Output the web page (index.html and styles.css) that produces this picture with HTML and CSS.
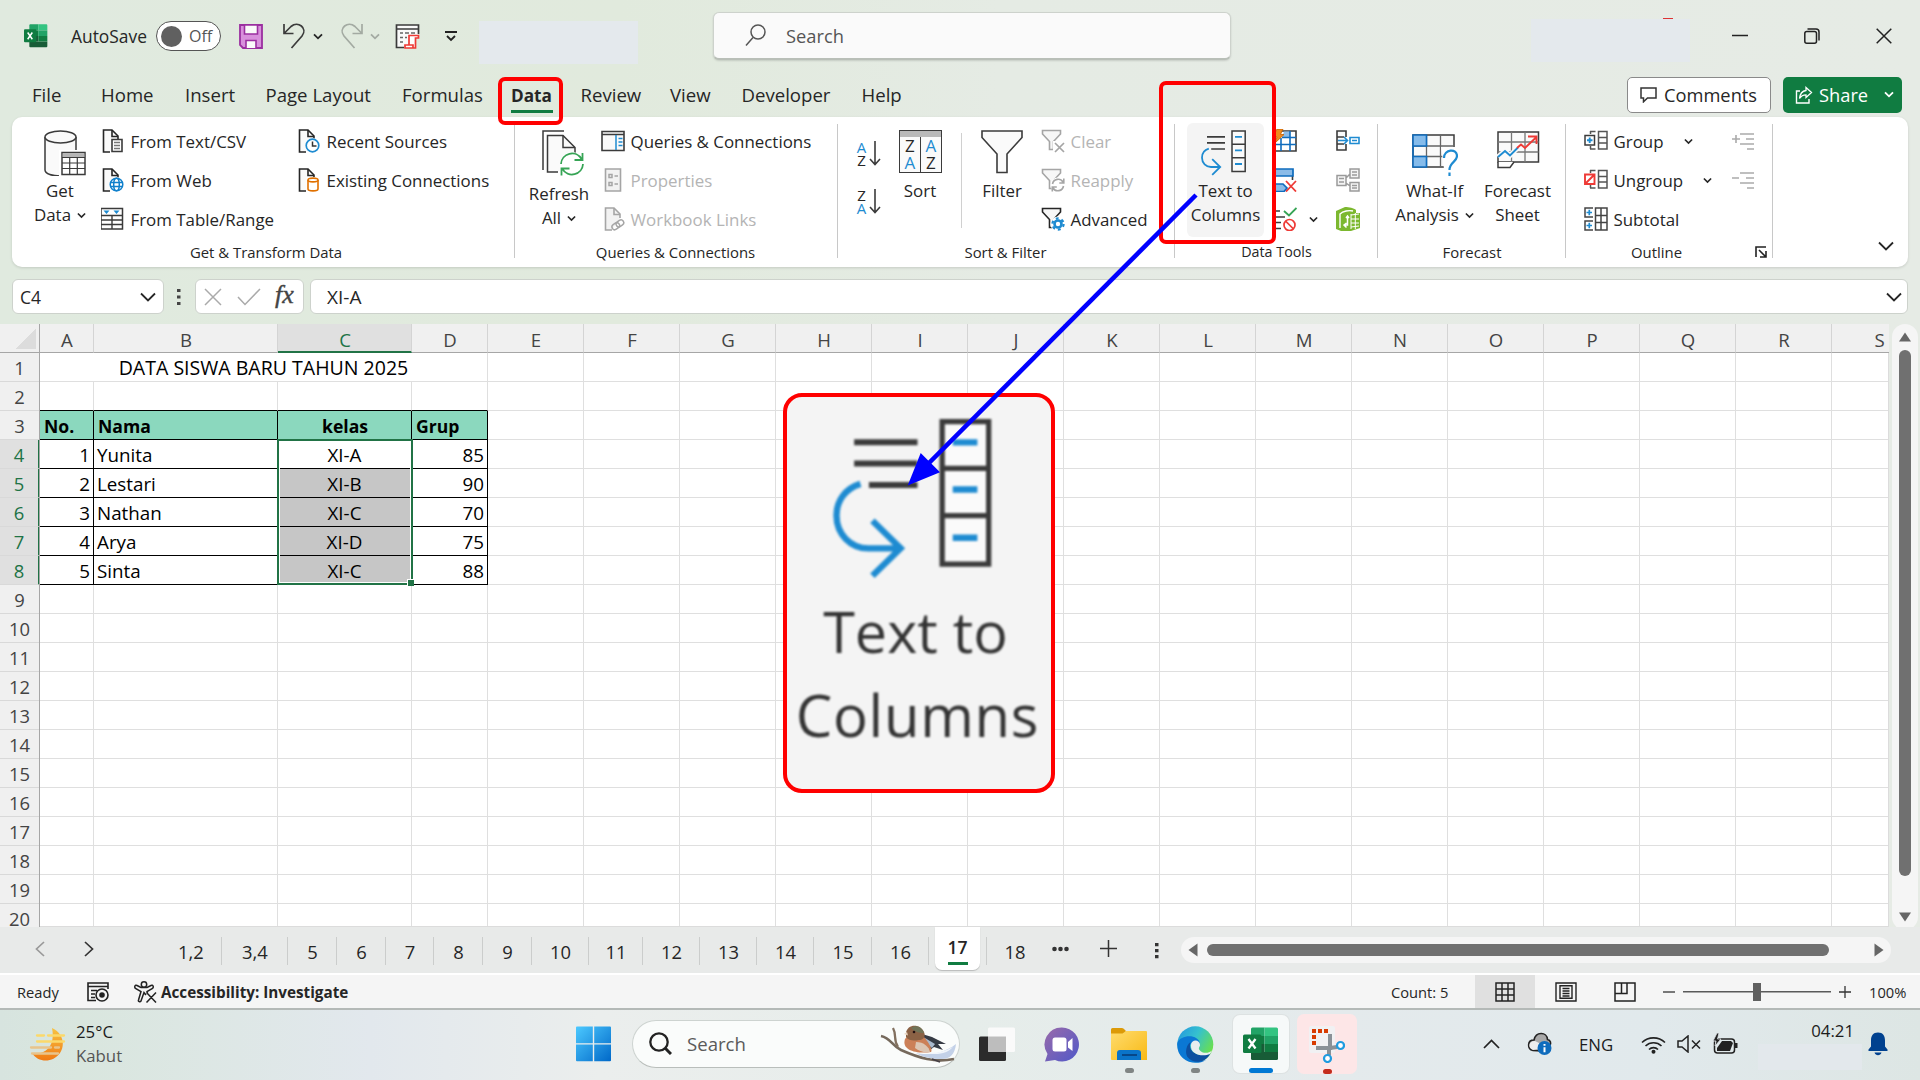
FILE: index.html
```html
<!DOCTYPE html>
<html lang="en">
<head>
<meta charset="utf-8">
<title>Excel</title>
<link rel="stylesheet" href="styles.css">
</head>
<body>
<svg class="defs" width="0" height="0">
  <symbol id="chev" viewBox="0 0 10 7"><path d="M1 1.3l4 4 4-4" fill="none" stroke="currentColor" stroke-width="1.8"/></symbol>
  <symbol id="chev-lg" viewBox="0 0 16 10"><path d="M1 1.5l7 7 7-7" fill="none" stroke="currentColor" stroke-width="1.8"/></symbol>
  <symbol id="page" viewBox="0 0 24 24"><path d="M9 23H2.500V1H11l6 6v3" fill="#fafafa" stroke="currentColor" stroke-width="1.6"/><path d="M11 1v6.500h6" fill="none" stroke="currentColor" stroke-width="1.600"/></symbol>
  <symbol id="ttc" viewBox="0 0 46 46">
    <path d="M6 6.900h18M6 12.900h18M10.200 19h13.800" stroke="#3b3b3b" stroke-width="1.700"/>
    <path d="M31 1h13.200v40.500H31zM31 14.300h13.200M31 27.700h13.200" fill="#fafafa" stroke="#3b3b3b" stroke-width="1.500"/>
    <path d="M34 6.900h7M34 20.300h7M34 34h7" stroke="#1e8bd1" stroke-width="1.800"/>
    <path d="M7.800 18.700C3.500 20 1 23.500 1 27.700 1 33 5 37 10 37h9M11.200 29.200l8 7.800-8 7.800" fill="none" stroke="#1e8bd1" stroke-width="1.800"/>
  </symbol>
  <symbol id="excel" viewBox="0 0 36 34">
    <path d="M8 2a1.500 1.500 0 0 1 1.500-1.500H21.500V9H8z" fill="#21a366"/><path d="M21.500.5h12A1.500 1.500 0 0 1 35 2v7H21.500z" fill="#33c481"/>
    <path d="M8 9h13.500v8H8z" fill="#107c41"/><path d="M21.500 9H35v8H21.500z" fill="#21a366"/>
    <path d="M8 17h13.500v8H8z" fill="#185c37"/><path d="M21.500 17H35v8H21.500z" fill="#107c41"/>
    <path d="M8 25h27v6.500a1.500 1.500 0 0 1-1.500 1.500h-24A1.500 1.500 0 0 1 8 31.500z" fill="#185c37"/>
    <rect y="7.500" width="18.500" height="18.500" rx="1.500" fill="#107c41"/>
    <path d="M5.500 12l7 9.500M12.500 12l-7 9.500" stroke="#fff" stroke-width="2.300"/>
  </symbol>
  <symbol id="funnel" viewBox="0 0 24 24"><path d="M1.500 1.500h18v3.500l-7 7.500v8h-4v-8l-7-7.500z" fill="#f7f7f7" stroke="currentColor" stroke-width="1.600"/></symbol>
</svg>

<div class="window">
  <header class="titlebar">
    <svg class="i-logo" width="24" height="24" viewBox="0 0 36 34" preserveAspectRatio="none"><use href="#excel"/></svg>
    <span class="autosave">AutoSave</span>
    <span class="toggle"><i></i>Off</span>
    <svg width="24" height="25" viewBox="0 0 24 25"><path d="M1 1h22v23H4l-3-3z" fill="#d890dc" stroke="#9b2fa0" stroke-width="1.800"/><path d="M5.500 1h13v9h-13zM7 24v-7.500h10V24" fill="#fafafa" stroke="#9b2fa0" stroke-width="1.600"/></svg>
    <svg width="24" height="26" viewBox="0 0 24 26"><path d="M2 1v9.500h9.500M2 10.500l7-7C16-2.500 26 5 20 13L9.500 25" fill="none" stroke="#3b3b3b" stroke-width="1.700"/></svg>
    <svg width="10" height="7"><use href="#chev"/></svg>
    <svg class="dim" width="24" height="26" viewBox="0 0 24 26"><path d="M22 1v9.500h-9.500M22 10.500l-7-7C8-2.500-2 5 4 13l10.500 12" fill="none" stroke="currentColor" stroke-width="1.700"/></svg>
    <svg class="dim" width="10" height="7"><use href="#chev"/></svg>
    <svg width="25" height="25" viewBox="0 0 25 25"><path d="M9 23.500H1.500V1h22v9M1.500 5h22" fill="#fafafa" stroke="#3b3b3b" stroke-width="1.700"/><path d="M5 9h3M10 9h4M16 9h4M5 13.500h3M10 13.500h2M5 18h3" stroke="#666" stroke-width="1.500"/><path d="M14 21V11.500h9.500V14h-3v10H10v-3h8v3" fill="#fff" stroke="#ee3a36" stroke-width="1.700"/></svg>
    <svg width="12" height="11" viewBox="0 0 12 11"><path d="M0 1h12" stroke="#222" stroke-width="2"/><path d="M2 5l4 4 4-4" fill="none" stroke="#222" stroke-width="1.800"/></svg>
    <span class="blank"></span>
    <div class="searchbox"><svg width="21" height="23" viewBox="0 0 21 23"><circle cx="13" cy="8" r="7" fill="none" stroke="#555" stroke-width="1.500"/><path d="M8 13.500L1 21.500" stroke="#555" stroke-width="1.500"/></svg>Search</div>
    <span class="blank account"><i class="badge"></i></span>
    <svg width="16" height="16" viewBox="0 0 16 16"><path d="M0 7.500h16" stroke="#222" stroke-width="1.500"/></svg>
    <svg width="16" height="16" viewBox="0 0 16 16"><rect x=".8" y="3.500" width="11.700" height="11.700" rx="2" fill="none" stroke="#222" stroke-width="1.500"/><path d="M3.500 1h8.500a3 3 0 0 1 3 3v8.500" fill="none" stroke="#222" stroke-width="1.500"/></svg>
    <svg width="16" height="16" viewBox="0 0 16 16"><path d="M.7.7l14.600 14.600M15.300.7L.7 15.300" stroke="#222" stroke-width="1.500"/></svg>
  </header>

  <nav class="tabs">
    <span>File</span><span>Home</span><span>Insert</span><span>Page Layout</span><span>Formulas</span><span class="on">Data</span><span>Review</span><span>View</span><span>Developer</span><span>Help</span>
    <button class="comments"><svg width="17" height="16" viewBox="0 0 17 16"><path d="M1 1h15v10H7.500L3.500 14.800V11H1z" fill="none" stroke="#333" stroke-width="1.500"/></svg>Comments</button>
    <button class="share"><svg width="18" height="18" viewBox="0 0 18 18"><path d="M5 5H1.500v12H14v-4" fill="none" stroke="#fff" stroke-width="1.400"/><path d="M11 1.500l5.500 5L11 11.500V8.800C8 8.800 6 10 4.500 12.500 5 8 7.500 5 11 4.500z" fill="none" stroke="#fff" stroke-width="1.300"/></svg>Share<svg class="sc" width="10" height="7"><use href="#chev"/></svg></button>
  </nav>

  <section class="ribbon">
    <div class="group g-get">
      <div class="gbody">
        <div class="big">
          <svg width="42" height="46" viewBox="0 0 42 46"><path d="M1 7v33c0 8 31 8 31 0V7" fill="#fafafa" stroke="#3b3b3b" stroke-width="1.500"/><ellipse cx="16.500" cy="7" rx="15.500" ry="6" fill="#fafafa" stroke="#3b3b3b" stroke-width="1.500"/><path d="M15 20h27v26H15z" fill="#fff"/><path d="M18 22.500h23v22H18z" fill="#fff" stroke="#3b3b3b" stroke-width="1.500"/><path d="M18.700 23.200h21.600v3.800H18.700z" fill="#b5b5b5"/><path d="M18 27.500h23M18 33h23M18 38.500h23M25.700 27.500v17M33.300 27.500v17" stroke="#3b3b3b" stroke-width="1.200"/></svg>
          <span>Get</span><span>Data <svg width="9" height="7"><use href="#chev"/></svg></span>
        </div>
        <div class="list">
          <div><svg width="24" height="24"><use href="#page"/><path d="M11 10.500h10v12H11z" fill="#fff" stroke="#3b3b3b" stroke-width="1.600"/><path d="M13 13.500h6M13 16.500h6M13 19.500h6" stroke="#777" stroke-width="1.300"/></svg>From Text/CSV</div>
          <div><svg width="24" height="24"><use href="#page"/><circle cx="15.500" cy="16.500" r="7.500" fill="#fff"/><g fill="none" stroke="#1080cc" stroke-width="1.500"><circle cx="15.500" cy="16.500" r="6.300"/><ellipse cx="15.500" cy="16.500" rx="2.800" ry="6.300"/><path d="M9.500 14.500h12M9.500 18.500h12"/></g></svg>From Web</div>
          <div><svg width="24" height="24" viewBox="0 0 24 24"><path d="M0 1.500h21.500V22H0z" fill="#fff" stroke="#3b3b3b" stroke-width="1.500"/><path d="M0 8.500h22M0 13h22M0 17.500h22M11 8.500V22" stroke="#3b3b3b" stroke-width="1.400"/><path d="M2.500 3.500h6l-3 3.500zM12.500 3.500h6l-3 3.500z" fill="#1e8bd1"/></svg>From Table/Range</div>
        </div>
        <div class="list c2">
          <div><svg width="24" height="24"><use href="#page"/><circle cx="15.500" cy="16.500" r="7.500" fill="#fff"/><path d="M15.500 12.500v4.500h4" fill="none" stroke="#333" stroke-width="1.500"/><circle cx="15.500" cy="16.500" r="6.300" fill="none" stroke="#1e8bd1" stroke-width="1.700"/></svg>Recent Sources</div>
          <div><svg width="24" height="24"><use href="#page"/><path d="M9.500 9h13v15h-13z" fill="#fff"/><path d="M11 12v9c0 2.500 10 2.500 10 0v-9" fill="#fff" stroke="#e07000" stroke-width="1.600"/><ellipse cx="16" cy="12" rx="5" ry="1.900" fill="#fff" stroke="#e07000" stroke-width="1.600"/></svg>Existing Connections</div>
        </div>
      </div>
      <div class="glabel">Get &amp; Transform Data</div>
    </div>

    <div class="group g-query">
      <div class="gbody">
        <div class="big low">
          <svg width="42" height="46" viewBox="0 0 42 46"><path d="M1 40V1h21" fill="none" stroke="#3b3b3b" stroke-width="1.500"/><path d="M16 42H5.500V5.500H21l12 12V24" fill="#fafafa" stroke="#3b3b3b" stroke-width="1.500"/><path d="M21 5.500v12h12" fill="none" stroke="#3b3b3b" stroke-width="1.500"/><circle cx="30" cy="34" r="12" fill="#fff"/><path d="M19 34a11 11 0 0 1 20.500-5M40.500 23v7h-8M41 34a11 11 0 0 1-20.500 5M19.500 45.500v-7h8" fill="none" stroke="#36a455" stroke-width="1.800"/></svg>
          <span>Refresh</span><span>All <svg width="9" height="7"><use href="#chev"/></svg></span>
        </div>
        <div class="list">
          <div><svg width="24" height="24" viewBox="0 0 24 24"><path d="M1 2.500h22v19H1z" fill="#fafafa" stroke="#3b3b3b" stroke-width="1.600"/><path d="M1 5.500h22" stroke="#3b3b3b" stroke-width="1.500"/><path d="M15 6v15" stroke="#1e8bd1" stroke-width="1.500"/><path d="M17.500 9.500h4M17.500 13h4M17.500 16.500h4" stroke="#1e8bd1" stroke-width="1.700"/></svg>Queries &amp; Connections</div>
          <div class="off"><svg width="24" height="24" viewBox="0 0 24 24"><path d="M4.500 1h15v22h-15z" fill="#f2f2f2" stroke="#a5a5a5" stroke-width="1.600"/><path d="M8 6.500h3v3H8zM8 14.500h3v3H8zM13.500 8h3.500M13.500 16h3.500" fill="none" stroke="#a5a5a5" stroke-width="1.500"/></svg>Properties</div>
          <div class="off"><svg class="sh" width="24" height="24" viewBox="-2 0 24 24"><path d="M9 23H2.500V1H11l6 6v4" fill="#f2f2f2" stroke="#a5a5a5" stroke-width="1.600"/><path d="M11 1v6.500h6" fill="none" stroke="#a5a5a5" stroke-width="1.600"/><g fill="none" stroke="#a5a5a5" stroke-width="1.500" transform="rotate(-35 15 18)"><rect x="8.500" y="15" width="8" height="5.500" rx="2.700"/><rect x="13.500" y="15" width="8" height="5.500" rx="2.700"/></g></svg>Workbook Links</div>
        </div>
      </div>
      <div class="glabel">Queries &amp; Connections</div>
    </div>

    <div class="group g-sort">
      <div class="gbody">
        <div class="azcol">
          <div class="az"><span><b>A</b><i>Z</i></span><svg width="12" height="25" viewBox="0 0 12 25"><path d="M6 0v23M1 18l5 5.500 5-5.500" fill="none" stroke="#3b3b3b" stroke-width="1.600"/></svg></div>
          <div class="az"><span><i>Z</i><b>A</b></span><svg width="12" height="25" viewBox="0 0 12 25"><path d="M6 0v23M1 18l5 5.500 5-5.500" fill="none" stroke="#3b3b3b" stroke-width="1.600"/></svg></div>
        </div>
        <div class="big">
          <div class="sorticon"><span><i>Z</i><b>A</b></span><span><b>A</b><i>Z</i></span></div>
          <span>Sort</span>
        </div>
        <div class="vsep"></div>
        <div class="big">
          <svg width="42" height="46" viewBox="0 0 42 46"><path d="M1 1h40v6.500L26 24v18.500H16V24L1 7.500z" fill="#fafafa" stroke="#3b3b3b" stroke-width="1.600"/></svg>
          <span>Filter</span>
        </div>
        <div class="list">
          <div class="off"><svg width="24" height="24"><use href="#funnel"/><path d="M12 12h12v12H12z" fill="#fff"/><path d="M14 14l9 9M23 14l-9 9" stroke="#a5a5a5" stroke-width="1.700"/></svg>Clear</div>
          <div class="off"><svg width="24" height="24"><use href="#funnel"/><circle cx="17" cy="17" r="7.500" fill="#fff"/><path d="M11.500 16a5.700 5.700 0 0 1 10.500-2M22.800 10.500V15h-4.500M22.500 18a5.700 5.700 0 0 1-10.500 2M11.300 23.500V19h4.500" fill="none" stroke="#a5a5a5" stroke-width="1.600"/></svg>Reapply</div>
          <div><svg width="24" height="24"><use href="#funnel"/><circle cx="17" cy="17" r="7.500" fill="#fff"/><circle cx="17" cy="17" r="3.500" fill="#fff" stroke="#1e8bd1" stroke-width="2.600"/><circle cx="17" cy="17" r="5.600" fill="none" stroke="#1e8bd1" stroke-width="2.200" stroke-dasharray="2.900 2.960"/></svg>Advanced</div>
        </div>
      </div>
      <div class="glabel">Sort &amp; Filter</div>
    </div>

    <div class="group g-tools">
      <div class="gbody">
        <div class="big hot"><svg width="46" height="46"><use href="#ttc"/></svg><span>Text to</span><span>Columns</span></div>
        <div class="list icons">
          <div><svg width="24" height="24" viewBox="0 0 24 24"><path d="M6 2h17v20H2v-7" fill="#fff" stroke="#3b3b3b" stroke-width="1.600"/><path d="M11 2.500h6v6h-8z" fill="#8bbce8"/><path d="M9 8.500h14M2 15.500h21M17 2v20M8 9v13" stroke="#0f6cbd" stroke-width="1.600" fill="none"/><path d="M4 0h6L7.500 5.500h3.500L2 14l2-6H0z" fill="#f08a1d" stroke="#c25e00" stroke-width=".8"/></svg></div>
          <div><svg width="24" height="24" viewBox="0 0 24 24"><path d="M2 8v8M19.500 8v4" stroke="#3b3b3b" stroke-width="1.600"/><path d="M1 1h19v7H1zM1 16h9l4 4-3 3.500H1z" fill="#8bbce8" stroke="#0f6cbd" stroke-width="1.700"/><path d="M13 13l10 10.500M23 13L13 23.500" stroke="#ee3a36" stroke-width="1.800"/></svg></div>
          <div><svg width="24" height="24" viewBox="0 0 24 24"><path d="M0 4h7M0 10h12M0 15.500h8M0 21.500h8" stroke="#3b3b3b" stroke-width="1.700"/><path d="M11 4l5 4.500L23.500 1" fill="none" stroke="#36a455" stroke-width="1.800"/><circle cx="16.500" cy="18" r="5.500" fill="#fff" stroke="#ee3a36" stroke-width="1.700"/><path d="M12.500 14l8 8" stroke="#ee3a36" stroke-width="1.700"/></svg><svg class="lc" width="9" height="7"><use href="#chev"/></svg></div>
        </div>
        <div class="list icons">
          <div><svg width="24" height="24" viewBox="0 0 24 24"><path d="M10 8V2H1v19h9v-6M1 8h7M1 15h7" fill="#fafafa" stroke="#3b3b3b" stroke-width="1.600"/><path d="M2 11.500h9M8 8l3.500 3.500L8 15M14 8.500h9v6h-9zM16 11.500h5" fill="none" stroke="#1e8bd1" stroke-width="1.600"/></svg></div>
          <div><svg width="24" height="24" viewBox="0 0 24 24"><path d="M1 7.500h9v10H1zM14 1h9v9h-9zM14 14.500h9V23h-9zM10 10l4-4M10 15l4 3M3 10.500h5M3 14h5M16 4h5M16 7h5M16 17.500h5M16 20h5" fill="#f4f4f4" stroke="#9a9a9a" stroke-width="1.500"/></svg></div>
          <div><svg width="24" height="24" viewBox="0 0 24 24"><path d="M0 4L9 0c4 0 9 1 11 3v3h4v15l-9 3H5L0 22z" fill="#7cb82f"/><path d="M4 21V7c3-3 9-4 13-3" fill="none" stroke="#fff" stroke-width="1.400"/><path d="M15 8l8-1M15 12h8M15 16h8M15 20l8-1M15 7v15M19.300 6v16" stroke="#fff" stroke-width="1"/><path d="M11.500 9v9H8.500M10.500 16l-2.500 2 2.500 2.500M10 11l1.500-2L13 11" fill="none" stroke="#fff" stroke-width="1.500"/></svg></div>
        </div>
      </div>
      <div class="glabel tools">Data Tools</div>
    </div>

    <div class="group g-fore">
      <div class="gbody">
        <div class="big">
          <svg width="46" height="46" viewBox="0 0 46 46"><path d="M1 5h41v32H1z" fill="#fafafa" stroke="#3b3b3b" stroke-width="1.500"/><path d="M1 16h41M1 26.500h41M14.500 5v32M28.500 5v32" stroke="#666" stroke-width="1.300"/><path d="M1 5h13.500v11H1zM1 26.500h13.500V37H1z" fill="#85bbea" stroke="#0f6cbd" stroke-width="1.600"/><path d="M1 16v10.500" stroke="#0f6cbd" stroke-width="1.600"/><path d="M29 17h17v29H33z" fill="#fff"/><path d="M32 28c0-9 13-10 13-2 0 6-7.500 6-7.500 14M37.500 42.500V46" fill="none" stroke="#1e8bd1" stroke-width="2.200"/></svg>
          <span>What-If</span><span>Analysis <svg width="9" height="7"><use href="#chev"/></svg></span>
        </div>
        <div class="big">
          <svg width="46" height="46" viewBox="0 0 46 46"><path d="M3 2h40.500v30H3z" fill="#fafafa" stroke="#3b3b3b" stroke-width="1.500"/><path d="M3 12h40.500M3 22h40.500M16.500 2v30M30 2v30" stroke="#777" stroke-width="1.300"/><path d="M3 32v5.500h12l4-5.500" fill="#fff" stroke="#3b3b3b" stroke-width="1.500"/><path d="M3 27l7-6 5 4.500 8-8" fill="none" stroke="#fafafa" stroke-width="5"/><path d="M3 27l7-6 5 4.500 8-8" fill="none" stroke="#1e8bd1" stroke-width="1.900"/><path d="M22 18l4-3.500 4 3.500L41 7.500M33 6.500h8.500V14" fill="none" stroke="#ee3a36" stroke-width="1.900"/></svg>
          <span>Forecast</span><span>Sheet</span>
        </div>
      </div>
      <div class="glabel">Forecast</div>
    </div>

    <div class="group g-outline">
      <div class="gbody">
        <div class="list">
          <div><svg width="24" height="24" viewBox="0 0 24 24"><path d="M6 2.500h5.500M6 20h5.500M6.500 2v3M6.500 20v-3M14.500 2.500H23V20h-8.500zM14.500 8.500H23M14.500 14H23" fill="none" stroke="#555" stroke-width="1.500"/><path d="M1 6.500h9.500V16H1z" fill="#fff" stroke="#3b3b3b" stroke-width="1.500"/><path d="M3 11.300h5.500M5.700 8.500v5.500" stroke="#1e8bd1" stroke-width="1.900"/></svg>Group<svg class="c-a" width="9" height="7"><use href="#chev"/></svg></div>
          <div><svg width="24" height="24" viewBox="0 0 24 24"><path d="M6 2.500h5.500M6 20h5.500M6.500 2v3M6.500 20v-3M14.500 2.500H23V20h-8.500zM14.500 8.500H23M14.500 14H23" fill="none" stroke="#555" stroke-width="1.500"/><path d="M1 6.500h9.500V16H1zM1.500 15.500l8.500-8.500" fill="#fff" stroke="#ee3a36" stroke-width="1.900"/></svg>Ungroup<svg class="c-b" width="9" height="7"><use href="#chev"/></svg></div>
          <div><svg width="24" height="24" viewBox="0 0 24 24"><path d="M9 1H1v9h8M9 14H1v9h8M11.500 1H23v22H11.500zM11.500 8.500H23M11.500 15.500H23M17 1v22" fill="none" stroke="#444" stroke-width="1.500"/><path d="M2.500 5.500H8M5.300 2.700v5.500M2.500 18.500H8M5.300 15.700v5.500" stroke="#1e8bd1" stroke-width="1.700"/></svg>Subtotal</div>
        </div>
        <div class="list icons">
          <div><svg width="22" height="17" viewBox="0 0 22 17"><path d="M0 6h8M4 2v8M8 1h14M14 6h8M8 11h14M15 16h7" stroke="#aaa" stroke-width="1.600"/></svg></div>
          <div><svg width="22" height="17" viewBox="0 0 22 17"><path d="M0 6h7M8 1h14M14 6h8M8 11h14M15 16h7" stroke="#aaa" stroke-width="1.600"/></svg></div>
        </div>
      </div>
      <div class="glabel outline">Outline<svg width="12" height="12" viewBox="0 0 12 12"><path d="M1 11V1h10M4 4l6.500 6.500M11 5v6H5" fill="none" stroke="#222" stroke-width="1.600"/></svg></div>
    </div>
    <svg class="collapse" width="16" height="10"><use href="#chev-lg"/></svg>
  </section>

  <div class="formula">
    <div class="namebox">C4<svg width="16" height="10"><use href="#chev-lg"/></svg></div>
    <svg width="4" height="18" viewBox="0 0 4 18"><path d="M0 1h3.500v3H0zM0 7.500h3.500v3H0zM0 14h3.500v3H0z" fill="#444"/></svg>
    <div class="fxbox"><svg width="18" height="18" viewBox="0 0 18 18"><path d="M1 1l16 16M17 1L1 17" stroke="#aaa" stroke-width="1.500"/></svg><svg width="24" height="18" viewBox="0 0 24 18"><path d="M1 9l7 7.500L23 1" fill="none" stroke="#aaa" stroke-width="1.500"/></svg><em>fx</em></div>
    <div class="fbar">XI-A<svg width="16" height="10"><use href="#chev-lg"/></svg></div>
  </div>

  <main class="sheet">
    <div class="corner"></div>
    <div class="cols"><span>A</span><span>B</span><span class="sel">C</span><span>D</span><span>E</span><span>F</span><span>G</span><span>H</span><span>I</span><span>J</span><span>K</span><span>L</span><span>M</span><span>N</span><span>O</span><span>P</span><span>Q</span><span>R</span><span>S</span></div>
    <div class="vscroll"><svg width="14" height="10" viewBox="0 0 14 10"><path d="M7 .5l6 9H1z" fill="#666"/></svg><i></i><svg width="14" height="10" viewBox="0 0 14 10"><path d="M7 9.500l6-9H1z" fill="#666"/></svg></div>
    <div class="rows"><span>1</span><span>2</span><span>3</span><span class="sel">4</span><span class="sel">5</span><span class="sel">6</span><span class="sel">7</span><span class="sel">8</span><span>9</span><span>10</span><span>11</span><span>12</span><span>13</span><span>14</span><span>15</span><span>16</span><span>17</span><span>18</span><span>19</span><span>20</span></div>
    <div class="cells">
      <div class="data">
        <div class="title">DATA SISWA BARU TAHUN 2025</div>
        <div class="gap"></div><div class="gap"></div><div class="gap"></div><div class="gap"></div>
        <div class="h">No.</div><div class="h">Nama</div><div class="h c">kelas</div><div class="h">Grup</div>
        <div class="r">1</div><div>Yunita</div><div class="c">XI-A</div><div class="r">85</div>
        <div class="r">2</div><div>Lestari</div><div class="c s">XI-B</div><div class="r">90</div>
        <div class="r">3</div><div>Nathan</div><div class="c s">XI-C</div><div class="r">70</div>
        <div class="r">4</div><div>Arya</div><div class="c s">XI-D</div><div class="r">75</div>
        <div class="r">5</div><div>Sinta</div><div class="c s">XI-C</div><div class="r">88</div>
      </div>
      <div class="selection"><i></i></div>
    </div>
  </main>

  <div class="sheettabs">
    <div class="nav"><svg class="dim2" width="10" height="16" viewBox="0 0 10 16"><path d="M9 1L1.500 8 9 15" fill="none" stroke="#999" stroke-width="1.700"/></svg><svg width="10" height="16" viewBox="0 0 10 16"><path d="M1 1l7.500 7L1 15" fill="none" stroke="#333" stroke-width="1.700"/></svg></div>
    <span>1,2</span><span>3,4</span><span>5</span><span>6</span><span>7</span><span>8</span><span>9</span><span>10</span><span>11</span><span>12</span><span>13</span><span>14</span><span>15</span><span>16</span><span class="active"><b>17</b></span><span class="last">18</span>
    <svg width="17" height="6" viewBox="0 0 17 6"><g fill="#333"><circle cx="2.500" cy="3" r="2.300"/><circle cx="8.500" cy="3" r="2.300"/><circle cx="14.500" cy="3" r="2.300"/></g></svg>
    <svg width="17" height="17" viewBox="0 0 17 17"><path d="M0 8.500h17M8.500 0v17" stroke="#333" stroke-width="1.500"/></svg>
    <svg class="dots" width="4" height="16" viewBox="0 0 4 16"><path d="M0 0h3.500v3.300H0zM0 6h3.500v3.300H0zM0 12h3.500v3.300H0z" fill="#333"/></svg>
    <div class="hscroll"><svg width="10" height="14" viewBox="0 0 10 14"><path d="M.5 7l9-6.500v13z" fill="#666"/></svg><i></i><svg width="10" height="14" viewBox="0 0 10 14"><path d="M9.500 7l-9-6.500v13z" fill="#666"/></svg></div>
  </div>

  <div class="status">
    <span>Ready</span>
    <svg width="23" height="20" viewBox="0 0 23 20"><path d="M9 18.500H1V1h20v6M1 4.500h20M4 8.500h6M4 12h4M4 15.500h4" fill="none" stroke="#222" stroke-width="1.600"/><circle cx="15" cy="13" r="6" fill="#f5f5f5" stroke="#222" stroke-width="1.600"/><circle cx="15" cy="13" r="2.800" fill="#222"/></svg>
    <svg width="23" height="22" viewBox="0 0 23 22"><circle cx="10" cy="3.500" r="2.700" fill="none" stroke="#222" stroke-width="1.500"/><path d="M12 14l-2-2.500-3 8.500c-1 1.500-3 .5-2.500-1L7 10.500l-5.500-3C0 6 1 3.500 3 4.500l4 2h6l4-2c2-1 3 1.500 1.500 3L13 10.500l.5 1.500M12.500 11.500L22 21.500M22 11.500l-9.500 10" fill="none" stroke="#222" stroke-width="1.500"/></svg>
    <strong>Accessibility: Investigate</strong>
    <span class="count">Count: 5</span>
    <div class="view"><svg width="20" height="20" viewBox="0 0 20 20"><path d="M1 1h18v18H1zM1 7h18M1 13h18M7 1v18M13 1v18" fill="none" stroke="#222" stroke-width="1.500"/></svg></div>
    <svg width="22" height="20" viewBox="0 0 22 20"><path d="M1 1h20v18H1zM5 3.700h12v12.600H5zM7.500 6.500h7M7.500 9h7M7.500 11.500h7M7.500 14h7" fill="none" stroke="#222" stroke-width="1.400"/></svg>
    <svg width="22" height="20" viewBox="0 0 22 20"><path d="M1 1h20v18H1zM1 11.500h12V1M7.500 1v10.500" fill="none" stroke="#222" stroke-width="1.500"/></svg>
    <svg width="12" height="12" viewBox="0 0 12 12"><path d="M0 6h12" stroke="#333" stroke-width="1.300"/></svg>
    <div class="slider"><i></i></div>
    <svg width="12" height="12" viewBox="0 0 12 12"><path d="M0 6h12M6 0v12" stroke="#333" stroke-width="1.300"/></svg>
    <span>100%</span>
  </div>

  <footer class="taskbar">
    <svg width="37" height="35" viewBox="0 0 37 35"><defs><linearGradient id="m" x1="0" y1="0" x2="0" y2="1"><stop offset="0" stop-color="#f7c343"/><stop offset="1" stop-color="#f07a14"/></linearGradient></defs><path d="M23 1c10 4 14 16 8 25-7 10-22 10-28 0 12 3 24-6 20-25z" fill="url(#m)"/><g stroke-linecap="round" stroke-width="2.300"><path d="M8 8.500h7M19 8.500h16M8 14.500h27" stroke="#fbd96b"/><path d="M2 20.500h20M26 20.500h4M3 26.500h26" stroke="#e8c48c"/></g></svg>
    <div class="weather"><span>25°C</span><span>Kabut</span></div>
    <svg width="36" height="36" viewBox="0 0 36 36"><defs><linearGradient id="w" x1="0" y1="0" x2="1" y2="1"><stop offset="0" stop-color="#4cc9ff"/><stop offset="1" stop-color="#0068c8"/></linearGradient></defs><path d="M0 1.500Q0 .5 1 .5h15.800v16.700H0zM18.200.5H34q1 0 1 1v15.700H18.200zM0 18.500h16.800v16.800H1q-1 0-1-1zM18.200 18.500H35v15.800q0 1-1 1H18.200z" fill="url(#w)"/></svg>
    <div class="tsearch"><svg width="23" height="23" viewBox="0 0 23 23"><circle cx="10" cy="10" r="8.700" fill="none" stroke="#222" stroke-width="2.300"/><path d="M16 16l6 6" stroke="#222" stroke-width="3"/></svg>Search
      <svg class="bird" width="78" height="38" viewBox="0 0 78 38"><path d="M1 11c10 2 11 10 20 14 18 8 34 13 53 9" fill="none" stroke="#75695c" stroke-width="2.600"/><path d="M13 3c4 7 0 12 5 19" fill="none" stroke="#82705f" stroke-width="2.300"/><path d="M36 28c10 2 26 2 40-9-1 10-6 15-14 15-10 0-20-2-26-6z" fill="#c3d1e8"/><path d="M42 27c12 2 22 0 31-5-6 7-17 9-31 5z" fill="#f1f5fb"/><path d="M42 9l10 3 14 7-8 0 5 6-9-3-4 3z" fill="#363b45"/><path d="M45 13l10 6-3 4-6-5z" fill="#a8b9cd"/><path d="M25 14c4-6 13-8 19-2 5 6 9 13 7 15-13 2-30-1-26-13z" fill="#cc8058"/><path d="M36 17c8 0 13 5 14 10-6 1-11-1-15-4z" fill="#dcc6b4"/><path d="M26 8c1-9 14-10 18-1 2 5-1 8-5 8-5 1-10 1-13-3z" fill="#8b6245"/><path d="M31 3c5-4 11-1 13 5-5 0-9-1-13-5z" fill="#707458"/><circle cx="34" cy="7" r="1.300" fill="#211"/><path d="M27 7l-3 2 4 1.500z" fill="#e8d4c0"/><path d="M52 34l8 3" fill="none" stroke="#454046" stroke-width="1.800"/></svg>
    </div>
    <svg width="36" height="35" viewBox="0 0 36 35"><rect y="9.500" width="27" height="24.500" rx="1.500" fill="#2b2b2b"/><rect x="9" y=".5" width="27" height="24.500" rx="1.500" fill="#fafafa"/><path d="M9 9.500h18V25H10.500A1.500 1.500 0 0 1 9 23.500z" fill="#bdbdbd"/></svg>
    <svg width="36" height="35" viewBox="0 0 36 35"><defs><linearGradient id="v" x1="0" y1="0" x2="1" y2="1"><stop offset="0" stop-color="#9a6aa9"/><stop offset="1" stop-color="#5059c9"/></linearGradient></defs><path d="M18 .5a17 17 0 1 1-7 32.500L1 34.500 3.500 27A17 17 0 0 1 18 .5z" fill="url(#v)"/><rect x="8.500" y="10.500" width="14" height="14" rx="2.500" fill="#fff"/><path d="M24 15l4.500-4v13L24 20.500z" fill="#fff"/></svg>
    <div class="app"><svg width="37" height="35" viewBox="0 0 37 35"><defs><linearGradient id="f" x1="0" y1="0" x2="1" y2="1"><stop offset="0" stop-color="#ffdc6e"/><stop offset="1" stop-color="#f8b914"/></linearGradient></defs><path d="M0 2.500Q0 1 1.500 1H11q1.500 0 2.500 1.500L15 4l-3 6H0z" fill="#dc9a08"/><path d="M0 6.500h11.500L15 4h20q1 0 1 1v28H1q-1 0-1-1z" fill="url(#f)"/><path d="M6 33V26a3 3 0 0 1 3-3h18a3 3 0 0 1 3 3v7z" fill="#0a74c9"/><path d="M11 28h15" stroke="#073b78" stroke-width="1.600"/></svg><i></i></div>
    <div class="app"><svg width="37" height="37" viewBox="0 0 37 37"><defs><linearGradient id="e1" x1="0" y1="0" x2="1" y2=".6"><stop offset="0" stop-color="#2293e0"/><stop offset=".5" stop-color="#35c1cf"/><stop offset="1" stop-color="#6be04b"/></linearGradient></defs><circle cx="18.300" cy="18.300" r="18" fill="url(#e1)"/><path d="M.3 17C4 8 22 8 23 18c-8-6-16 4-7 13 3 3 9 5 13 3C18 41-1 35 .3 17z" fill="#0b78d4"/><path d="M13.500 16c-3 10 8 16 20 11-5 11-18 11-23 4-3-5-1-12 3-15z" fill="#0d4fa0"/><path d="M14 19c0-6 9-6 9 0 0 2-2 2.500-.5 5 3 4 10 3.500 13 0l-2.500 4c-7 3-20 1-19-9z" fill="#e8eeee"/></svg><i></i></div>
    <div class="app tile"><svg width="36" height="34"><use href="#excel"/></svg><i></i></div>
    <div class="app tile snip"><svg width="36" height="37" viewBox="0 0 36 37"><rect width="26" height="27" rx="2" fill="#f1f1f3"/><path d="M5 19V5h16" fill="none" stroke="#d83b01" stroke-width="4" stroke-dasharray="4 2"/><path d="M21 8v14H7" fill="none" stroke="#8a9197" stroke-width="4"/><path d="M21 22l7-1M20 22v7" stroke="#8a9197" stroke-width="4"/><circle cx="31.500" cy="19.500" r="3.500" fill="#fff" stroke="#1e9be0" stroke-width="2.200"/><circle cx="18.500" cy="32.500" r="3.500" fill="#fff" stroke="#1e9be0" stroke-width="2.200"/></svg><i></i></div>
    <svg width="17" height="10" viewBox="0 0 17 10"><path d="M1 9l7.500-7.500L16 9" fill="none" stroke="#222" stroke-width="1.700"/></svg>
    <svg width="26" height="24" viewBox="0 0 26 24"><path d="M6 18.500C0 17 0 8 7 8 9-1 20 0 20.500 7.500 24 8 24 12 23 13L14 19z" fill="#a9a9a9" stroke="#222" stroke-width="1.600"/><path d="M6 18C0 16 2 8.500 8 9l12 6z" fill="#eee"/><circle cx="17.500" cy="16" r="7" fill="#0f6cbd"/><path d="M17.500 12v1.800M17.500 15.200v5" stroke="#fff" stroke-width="2"/></svg>
    <span>ENG</span>
    <svg width="25" height="19" viewBox="0 0 25 19"><path d="M1 7.500a16.500 16.500 0 0 1 23 0M4.500 11a11.500 11.500 0 0 1 16 0M8 14.500a6.300 6.300 0 0 1 9 0" fill="none" stroke="#222" stroke-width="1.600"/><circle cx="12.500" cy="16.700" r="2" fill="#222"/></svg>
    <svg width="24" height="18" viewBox="0 0 24 18"><path d="M1 6v6h4l6 5V1L5 6z" fill="none" stroke="#222" stroke-width="1.500"/><path d="M15 5.500l8 8M23 5.500l-8 8" stroke="#222" stroke-width="1.500"/></svg>
    <svg width="26" height="22" viewBox="0 0 26 22"><rect x="1.500" y="6" width="20" height="14" rx="3" fill="none" stroke="#222" stroke-width="1.500"/><path d="M9 8h9l2 2-3 8H4v-3z" fill="#222"/><path d="M22 10h2.500v5H22z" fill="#222"/><path d="M4 0L0 8h3l-1 5 6-7H4.500L6 0z" fill="#222" stroke="#e3e9ec" stroke-width=".8"/></svg>
    <div class="clock"><span>04:21</span><i></i></div>
    <svg width="20" height="24" viewBox="0 0 20 24"><path d="M10 .5c5 0 7 3.500 7 8v6l2.500 3v1.500H.5V17.500l2.500-3v-6c0-4.500 2-8 7-8zM6.500 20.500h7c-1 3.500-6 3.500-7 0z" fill="#00418f"/></svg>
  </footer>

  <div class="mark m-data"></div>
  <div class="mark m-ttc"></div>
  <div class="mark callout"><svg width="162" height="162"><use href="#ttc"/></svg><span>Text to</span><span class="wide">Columns</span></div>
  <svg class="arrow" width="320" height="320" viewBox="890 180 320 320"><path d="M1196 195L926 466" stroke="#00f" stroke-width="4.600"/><path d="M907.700 485.500l13-32.500 19.300 19.300z" fill="#00f"/></svg>
</div>
</body>
</html>
```
FILE: styles.css
```css
* { box-sizing: border-box; }
body { margin: 0; font-family: "Open Sans", "Noto Sans", sans-serif; color: #262626; }
i { font-style: normal; }
svg { flex: none; display: block; }
.defs { position: absolute; }
.window { position: relative; width: 1920px; height: 1080px; overflow: hidden; background: linear-gradient(90deg, #e0eadf 0, #e1eadd 620px, #e5ebe4 1000px, #e6ebe5 100%); display: flex; flex-direction: column; white-space: nowrap; }
.dim { color: #a3aaa2; }
button { font: inherit; color: inherit; padding: 0; }

/* title bar */
.titlebar { height: 72px; padding: 0 27px 0 24px; display: grid; grid-template-rows: 72px; align-items: center; grid-template-columns: 47px 85px 83px 43px 31px 27px 30px 25px 50px 34px 234px 818px 201px 72px 72px 16px; }
.autosave { font-size: 17.400px; }
.toggle { width: 65px; height: 30px; border: 1.500px solid #555; border-radius: 15px; background: #fff; display: flex; align-items: center; gap: 7px; padding-left: 4px; font-size: 16px; color: #555; }
.toggle i { width: 21px; height: 21px; border-radius: 50%; background: #606060; }
.blank { width: 159px; height: 43px; background: #e4e9ed; align-self: start; margin-top: 21px; }
.account { position: relative; margin-top: 19px; }
.badge { position: absolute; left: 132px; top: -1px; width: 10px; height: 1px; background: #d33; }
.searchbox { width: 518px; height: 48px; margin-top: 12px; align-self: start; border: 1px solid #cdd2cc; border-bottom: 2px solid #b9bfb8; border-radius: 6px; background: #fafafa; display: flex; align-items: center; gap: 20px; padding-left: 31px; font-size: 18.300px; color: #555; box-shadow: 0 1px 2px #0002; }

/* ribbon tabs */
.tabs { height: 45px; padding: 0 18px 5px 32px; display: grid; align-items: center; grid-template-columns: 69px 84px 80.500px 136.500px 109px 69.500px 89.500px 71.500px 120px 765.500px 156px 119px; font-size: 18.600px; }
.tabs span { line-height: 40px; padding-top: 3px; }
.tabs .on { font-weight: 700; font-size: 17.200px; width: 42px; height: 40px; border-bottom: 3px solid #107c41; line-height: 40px; padding-top: 3px; margin-top: -1px; }
.comments, .share { height: 36px; display: flex; align-items: center; border-radius: 5px; font-size: 18.300px; margin-top: 3px; padding-bottom: 1px; }
.comments { width: 144px; border: 1px solid #8a8a8a; background: #fff; padding-left: 12px; gap: 7px; }
.share { width: 119px; border: 0; background: #107c41; color: #fff; padding-left: 12px; gap: 6px; }
.sc { margin-left: 10px; }

/* ribbon */
.ribbon { width: 1896px; height: 150px; margin: 0 12px; background: #fff; border-radius: 10px; box-shadow: 0 1px 3px #0002; display: flex; flex: none; font-size: 16.900px; }
.group { display: flex; flex-direction: column; height: 150px; padding-top: 5px; background: linear-gradient(#c8c8c8, #c8c8c8) right 7px / 1px 134px no-repeat; flex: none; }
.gbody { height: 120px; display: flex; }
.glabel { height: 22px; line-height: 22px; font-size: 14.900px; text-align: center; margin-top: -1px; }
.g-get .glabel { padding-left: 5px; }
.g-query .glabel, .g-sort .glabel { padding-right: 2px; }
.glabel.tools { font-size: 14.300px; }
.g-get { width: 503px; }
.g-query { width: 323px; }
.g-sort { width: 337px; }
.g-tools { width: 203px; }
.g-fore { width: 188px; }
.g-outline { width: 207px; }
.big { display: flex; flex-direction: column; align-items: center; padding-top: 8px; line-height: 24px; flex: none; }
.big > svg, .sorticon { margin-bottom: 3px; }
.low > svg { margin-bottom: 6px; }
.big span { display: flex; align-items: center; gap: 6px; }
.list { height: 117px; display: grid; grid-template-rows: 39px 39px 39px; flex: none; }
.list > div { display: flex; align-items: center; gap: 5.500px; padding-bottom: 1px; }
.off { color: #b4b4b4; }
.off svg { color: #a5a5a5; }
.g-get .big { width: 80px; margin: 0 1px 0 8px; }
.g-get .big > svg { margin-left: 10px; }
.g-get .list { width: 196px; }
.g-query .big { width: 78px; margin-left: 5px; }
.g-query .big > svg { margin-left: 7px; }
.g-query .list { margin-left: 3px; }
.azcol { width: 57px; padding: 19px 0 0 18px; display: flex; flex-direction: column; gap: 23px; }
.az { display: flex; gap: 2px; height: 25px; }
.az span { display: flex; flex-direction: column; align-items: center; font-size: 15px; line-height: 13px; width: 11px; font-weight: 500; }
.az b, .sorticon b { font-weight: 500; color: #1e8bd1; }
.sorticon { width: 43px; height: 43px; border: 1.500px solid #3b3b3b; border-top: 7px solid #b9b9b9; outline: 1px solid #3b3b3b; outline-offset: -1px; display: grid; grid-template-columns: 1fr 1fr; background: #fafafa; margin-bottom: 6px; }
.sorticon span { flex-direction: column; gap: 0; font-size: 17px; line-height: 17px; }
.sorticon span + span { border-left: 1.500px solid #3b3b3b; }
.g-sort .big { width: 50px; }
.vsep { width: 1px; height: 95px; background: #d0d0d0; margin: 11px 15px 0 16px; }
.g-sort .list { margin-left: 14px; }
.hot { width: 77px; height: 114px; margin: 1px 9px 0 12px; background: #f4f4f4; border-radius: 6px; padding-top: 7px; }
.hot > svg { margin-left: -3px; }
.g-tools .icons { width: 63px; }
.lc { margin-left: 6px; }
.g-fore .big { width: 83px; }
.g-fore .big:first-child { margin-left: 15px; }
.g-outline .list:first-child { width: 148px; margin-left: 18px; }
.c-a { margin-left: 15px; }
.c-b { margin-left: 14px; }
.glabel.outline { display: flex; justify-content: flex-end; align-items: center; gap: 73px; padding: 0 6px 0 0; }
.collapse { margin: 124px 0 0 105px; }

/* formula bar */
.formula { height: 57px; flex: none; padding: 12px 12px 10px 12px; display: flex; align-items: center; font-size: 18px; }
.namebox, .fxbox, .fbar { height: 35px; background: #fff; border: 1px solid #cdd2cc; border-radius: 6px; display: flex; align-items: center; flex: none; }
.namebox { width: 152px; padding: 0 7px; justify-content: space-between; margin-right: 13px; font-size: 17.500px; }
.fxbox { width: 109px; margin: 0 6px 0 14px; padding-left: 8px; gap: 15px; }
.fxbox em { font: italic 400 26px/26px "Liberation Serif", serif; -webkit-text-stroke: .4px #444; color: #444; margin-left: -1px; padding-bottom: 4px; }
.fbar { flex: 1; padding: 0 5px 0 16px; justify-content: space-between; font-size: 19px; }

/* grid */
.sheet { display: grid; grid-template: 29px 574px / 40px 1849px 31px; flex: none; }
.corner { background: linear-gradient(135deg, transparent 50%, #dcdcdc 50%) 15px 5px / 21px 20px no-repeat, #f0f0f0; border: solid #a6a6a6; border-width: 0 1px 1px 0; }
.cols { display: grid; grid-template-columns: 54px 184px 134px 76px repeat(14, 96px) 57px; overflow: hidden; background: #f0f0f0; font-size: 18.600px; color: #444; text-align: center; line-height: 32px; }
.cols span { border-right: 1px solid #d4d4d4; border-bottom: 1px solid #a6a6a6; height: 29px; padding-left: 1px; }
.cols .sel { background: #e0e0e0; color: #217346; border-bottom: 2px solid #217346; }
.cols span:last-child { padding-left: 38px; border-right: 0; }
.vscroll { grid-row: 1 / 3; grid-column: 3; width: 26px; margin-left: 3px; background: #f5f5f5; border-radius: 13px; height: 606px; display: flex; flex-direction: column; align-items: center; padding: 8px 0; }
.vscroll i { width: 12px; height: 527px; margin: 8px 0 36px; border-radius: 6px; background: #707070; }
.rows { background: #f0f0f0; overflow: hidden; font-size: 18.400px; color: #444; text-align: center; line-height: 30px; border-right: 1px solid #a6a6a6; }
.rows span { display: block; height: 29px; border-bottom: 1px solid #d9d9d9; margin-right: -1px; padding-right: 1px; }
.rows .sel { background: #e0e0e0; color: #217346; border-right: 2px solid #217346; padding-right: 0; }
.cells { position: relative; border-right: 1px solid #dcdcdc; border-bottom: 1px solid #dcdcdc; background:
  repeating-linear-gradient(transparent 0 28px, #dfdfdf 28px 29px),
  linear-gradient(#dfdfdf, #dfdfdf) 53px 0 / 1px 100% no-repeat,
  linear-gradient(#dfdfdf, #dfdfdf) 237px 0 / 1px 100% no-repeat,
  linear-gradient(#dfdfdf, #dfdfdf) 371px 0 / 1px 100% no-repeat,
  repeating-linear-gradient(90deg, transparent 0 95px, #dfdfdf 95px 96px) 448px 0 / 1401px 100% no-repeat,
  linear-gradient(#dfdfdf, #dfdfdf) 447px 0 / 1px 100% no-repeat, #fff; }
.data { display: grid; grid-template-columns: 54px 184px 134px 76px; grid-auto-rows: 29px; width: 448px; font-size: 18.800px; line-height: 30px; color: #000; }
.data div { border: solid #000; border-width: 0 1px 1px 0; padding: 0 3px; background: #fff; }
.data .title { grid-column: 1 / 5; text-align: center; font-size: 19.550px; border-color: #dfdfdf; }
.data .gap { background: none; border-right-color: #dfdfdf; }
.data .h { background: #8bd8be; font-weight: 700; font-size: 17.600px; padding-left: 4px; }
.data .c { text-align: center; }
.data .r { text-align: right; }
.data .s { background: #c6c6c6; }
.selection { position: absolute; left: 237px; top: 86px; width: 136px; height: 146px; border: 2px solid #217346; box-shadow: inset 0 0 0 1px #fff; }
.selection i { position: absolute; right: -3px; bottom: -3px; width: 7px; height: 7px; background: #217346; border: solid #fff; border-width: 1px 0 0 1px; }

/* sheet tabs */
.sheettabs { height: 48px; flex: none; background: #e8eae9; border-bottom: 2px solid #fff; display: flex; align-items: center; font-size: 18.400px; }
.sheettabs > span { text-align: center; height: 28px; line-height: 30px; border-right: 1px solid #cbcdcc; width: 49px; flex: none; align-self: flex-start; margin-top: 10px; padding-left: 1px; }
.nav { display: flex; gap: 39px; width: 160px; padding: 0 0 2px 35px; flex: none; }
.sheettabs > span:nth-of-type(1) { width: 62px; }
.sheettabs > span:nth-of-type(2) { width: 66px; }
.sheettabs > span:nth-of-type(5) { width: 48px; }
.sheettabs > span:nth-of-type(8) { width: 57px; }
.sheettabs > span:nth-of-type(9) { width: 54px; }
.sheettabs > span:nth-of-type(n+10) { width: 57px; }
.sheettabs > span:nth-of-type(13) { width: 58px; }
.sheettabs > .active:nth-of-type(n) { width: 45px; height: 43px; margin: 0 6px; padding: 0; background: #fff; border: 0; border-radius: 0 0 7px 7px; box-shadow: 0 1px 1px #0003; line-height: 40px; display: flex; justify-content: center; }
.active b { font-weight: 600; font-size: 17.500px; width: 20px; height: 38px; border-bottom: 3px solid #107c41; }
.sheettabs > .last:nth-of-type(n) { width: 62px; border: 0; border-left: 1px solid #cbcdcc; padding: 0 5px 0 0; }
.sheettabs > svg { margin: 0 0 3px 4px; }
.sheettabs > svg + svg { margin-left: 31px; }
.sheettabs > svg.dots { margin: 2px 0 0 38px; }
.hscroll { width: 710px; height: 26px; margin: 0 0 0 22px; background: #f5f5f5; border-radius: 13px; display: flex; align-items: center; padding: 0 7px; gap: 8px; justify-content: space-between; }
.hscroll i { width: 622px; height: 12px; border-radius: 6px; background: #707070; margin-right: 37px; }

/* status bar */
.status { height: 35px; flex: none; background: #f5f5f5; border-bottom: 2px solid #b4b9b7; display: grid; align-items: center; padding-left: 17px; font-size: 14.700px; grid-template-columns: 70px 47px 27px 1230px 84px 80px 59px 49px 20px 156px 30px auto; }
.status strong { font-size: 15.250px; }
.view { width: 60px; height: 33px; background: #e0e0e0; display: grid; place-items: center; }
.slider { width: 148px; height: 18px; background: linear-gradient(#5a5a5a, #5a5a5a) 0 50% / 100% 1.500px no-repeat; }
.slider i { display: block; width: 8px; height: 18px; margin-left: 70px; background: #606060; }

/* taskbar */
.taskbar { flex: 1; display: grid; align-items: center; padding: 0 0 2px 29px; font-size: 16.800px; color: #1c1c1c; background: linear-gradient(90deg, #d7e4df 0, #d9e6de 80px, #e2e8ed 370px, #ebeeed 600px, #e6edea 960px, #e4eaec 1340px, #e1e9ec 1650px, #dde6e4 1920px); grid-template-columns: 47px 500px 56px 347px 65px 67px 66px 56px 64px 186px 44px 52px 62px 36px 36px 45px 110px 20px; }
.weather, .clock { display: flex; flex-direction: column; line-height: 24px; }
.weather span + span { color: #555; }
.tsearch { width: 328px; height: 48px; border: 1.500px solid #cdd3d0; border-bottom-color: #b9bebb; border-radius: 24px; background: #fafcfb; display: flex; align-items: center; padding: 0 0 1px 16px; gap: 15px; font-size: 18.600px; color: #5a5a5a; }
.bird { margin-left: 119px; }
.app { height: 60px; width: 37px; display: flex; flex-direction: column; align-items: center; justify-content: center; position: relative; }
.app i { position: absolute; bottom: 1px; width: 9px; height: 5px; border-radius: 3px; background: #808584; }
.tile { width: 56px; height: 58px; background: #f6f9f9; border-radius: 7px; box-shadow: 0 0 0 1px #dde2e2; }
.tile i { width: 24px; background: #0078d4; bottom: 0; }
.snip { width: 60px; height: 60px; background: #fde6e7; box-shadow: none; }
.snip i { width: 9px; background: #c42b1c; }
.clock { width: 104px; height: 52px; align-items: flex-end; }
.clock span { padding-right: 8px; line-height: 26px; }
.clock i { width: 104px; height: 28px; background: #e3e8ec; }

/* annotations over the window */
.mark { position: absolute; border: 4px solid #f00; }
.m-data { left: 498px; top: 76.500px; width: 65px; height: 48px; border-radius: 7px; }
.m-ttc { left: 1159px; top: 81px; width: 117px; height: 163px; border-radius: 7px; }
.callout { left: 783px; top: 393px; width: 272px; height: 400px; border-radius: 19px; background: #f4f4f4; display: flex; flex-direction: column; align-items: center; font-size: 57.500px; line-height: 84px; color: #333; }
.callout svg { margin: 21px 11px 9px 0; }
.callout svg, .callout span { filter: blur(.8px); }
.callout span { margin-left: -7px; }
.callout .wide { font-size: 58px; letter-spacing: .7px; margin-left: -3px; }
.arrow { position: absolute; left: 890px; top: 180px; }
```
